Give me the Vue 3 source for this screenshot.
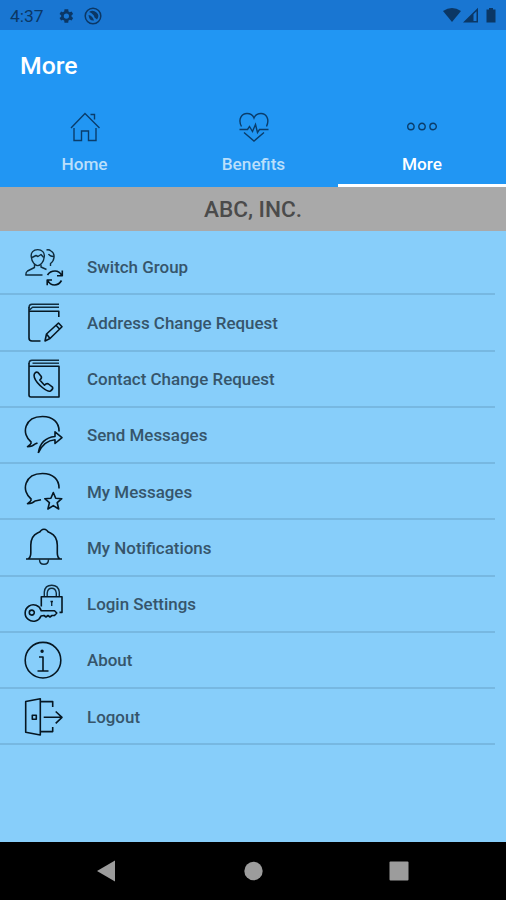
<script setup>
const tabs = [
  {
    label: 'Home',
    icon: ['M2 17 16 2.500 30.500 17', 'M5 17V29.500H12.500V20H19.500V29.500H27V17', 'M21.500 3.500H25.500V8.500']
  },
  {
    label: 'Benefits',
    icon: [
      'M3.500 15.500C-.5 8 4 2.500 9 2.500C13 2.500 15 4.500 16 7C17 4.500 19 2.500 23 2.500C28 2.500 32 8 28.500 15.500',
      'M1.500 18.500H9.500L11.500 15.500 14.500 20.500 17.500 13.500 19.500 21.500 21.500 18.500H30.500',
      'M6 21.500 16 30 26 21.500'
    ]
  },
  {
    label: 'More',
    active: true,
    icon: [
      'M1.700 15.500a3.200 3.200 0 1 0 6.400 0a3.200 3.200 0 1 0-6.400 0',
      'M12.800 15.500a3.200 3.200 0 1 0 6.400 0a3.200 3.200 0 1 0-6.400 0',
      'M23.900 15.500a3.200 3.200 0 1 0 6.400 0a3.200 3.200 0 1 0-6.400 0'
    ]
  }
]

const bubbleTop = 'M7.500 27.500C-3.500 19 .5 1.500 18.500 1.500C29 1.500 35.300 7.500 35 16.500'
const bubbleTail = 'M7.500 27.500Q6.500 30 3.500 31.700Q8.500 31.700 11 29'
const book = 'M35 1.300H8Q5 1.300 5 4.500'

const items = [
  {
    label: 'Switch Group',
    icon: [
      'M7.300 10C6.500 5.500 9.500 2.600 13.700 2.600S21 5.500 20.200 10C19.800 15 16.500 18.600 13.700 18.600S7.800 15 7.300 10',
      'M8 10.500 12 8.500 14 9.500 17 7.500 19.700 10.500',
      'M10.500 17V20.500L3.500 24Q1.800 25 1.800 28H18.500M17 17.500V20L22.500 22.500',
      'M22.500 3Q25 2.300 27 4Q30.500 6 30 10.500Q29.500 14.500 26.500 16.500V19M24.500 7Q26 9.500 29.500 9.500'
    ],
    bold: ['M23.500 28Q26 24 31 24Q35.500 24 37.700 28.500M38.300 23.500V28.800H33M37.500 33.500Q35 38 30.500 38Q26 38 23.800 33.500M23.200 38.300V33H28']
  },
  {
    label: 'Address Change Request',
    icon: [book, 'M35 4.300H8.500L5.500 7'],
    bold: [
      'M5 4V35Q5 38 8 38H16.500M5.500 8.200H34.800V14',
      'M21 38 22.500 31 34.500 20 38 23.700 26 35.500ZM22.500 31 26 35.500M32 22.300 35.500 26'
    ]
  },
  {
    label: 'Contact Change Request',
    icon: [book, 'M35 4.200H8.500'],
    bold: [
      'M5 4V36Q5 38 7 38H35V7.300H5',
      'M10.300 15Q12 12.300 14 13.500L17.300 17.500Q18 19 15.800 21L20.500 26.200Q22.500 24 24.500 25L28.500 28.200Q29.500 30 26.500 32Q24 33 19 29Q12 23.500 10.400 18.500Q9.800 16.500 10.300 15'
    ]
  },
  {
    label: 'Send Messages',
    icon: [],
    bold: [
      bubbleTop,
      bubbleTail + 'L13.500 28',
      'M14.300 38Q16.500 23 31 21.500V16.800L38 22.600 31 28.500V24.800Q20 25.500 14.300 38'
    ]
  },
  {
    label: 'My Messages',
    icon: [],
    bold: [
      bubbleTop,
      bubbleTail + 'L17 27.800',
      'M29.300 20.500 31.700 26.300 37.800 26.700 33.200 30.700 34.700 37 29.300 33.600 23.900 37 25.400 30.700 20.800 26.700 26.900 26.300Z'
    ]
  },
  {
    label: 'My Notifications',
    icon: ['M15.500 31.500Q15.500 36.300 20 36.300T24.500 31.500'],
    bold: [
      'M2 31H38M4 31Q6.800 29.500 6.800 25V17Q7 8 13.500 5Q16.500 4 17 2.500Q20 0 23 2.500Q23.500 4 26.500 5Q33 8 33.300 17V25Q33.300 29.500 36 31'
    ]
  },
  {
    label: 'Login Settings',
    icon: [
      'M20.300 12.500V8Q21 1.300 27.700 1.300T35.300 8V12.500M23.200 12.500V9Q23.800 4.300 27.700 4.300T32.300 9V12.500',
      'M27.700 17V22'
    ],
    bold: [
      'M17.300 22.500V12.800H38V28.400H35.500',
      'M17.200 26.700A8.200 8.200 0 1 0 17 32L20 31.500 22 33 24 31.500 26 33 28 31.500 30.500 31.500 32.800 29 30.500 26.700Z',
      'M5.300 28.600a2.500 2.500 0 1 0 5 0a2.500 2.500 0 1 0-5 0M26.500 17.500H28.900'
    ]
  },
  {
    label: 'About',
    icon: [],
    bold: [
      'M1.200 20.200a17.800 17.800 0 1 0 35.600 0a17.800 17.800 0 1 0-35.600 0',
      'M15 17H19V31M13.500 31H24.500M17.200 11.200a.9.9 0 1 0 1.800 0a.9.9 0 1 0-1.800 0'
    ]
  },
  {
    label: 'Logout',
    icon: [],
    bold: [
      'M1.700 4.500 16.300 1.700V38L1.700 35.300Z',
      'M16.300 4.600H28.700V10M16.300 34.600H28.700V30',
      'M19.700 20.300H38M31.700 14.500 38 20.300 31.700 26.300',
      'M8.300 18.300H12.300V22.300H8.300Z'
    ]
  }
]
</script>

<template>
  <div class="screen">
    <div class="status">
      <span class="clock">4:37</span>
      <svg class="gear" viewBox="0 0 24 24" width="18" height="18">
        <path fill-rule="evenodd" d="M19.400 13a7.500 7.500 0 0 0 0-2l2.100-1.600-2-3.500-2.500 1a7.500 7.500 0 0 0-1.700-1L15 3h-5l-.4 2.900a7.500 7.500 0 0 0-1.700 1l-2.500-1-2 3.500L5.600 11a7.500 7.500 0 0 0 0 2l-2.200 1.600 2 3.500 2.500-1a7.500 7.500 0 0 0 1.700 1L10 21h5l.3-2.900a7.500 7.500 0 0 0 1.700-1l2.500 1 2-3.500zM12.500 15.500a3.500 3.500 0 1 1 0-7 3.500 3.500 0 0 1 0 7z" />
      </svg>
      <svg class="ring" viewBox="0 0 18 18" width="18" height="18">
        <circle cx="9" cy="9" r="7.800" fill="none" stroke="#0b3765" stroke-width="1.500" />
        <path d="M5 5Q9 2.500 12.500 5.500T13 12.500L10.500 10.500Q10 7 5 5ZM4.500 8Q8.500 8.500 10 13.500Q5 14 4.500 8Z" />
      </svg>
      <svg class="signals" viewBox="0 0 56 18" width="56" height="18">
        <path d="M0 4Q9-2 18 4L9 15Z" />
        <path fill-rule="evenodd" d="M20 15.500 35 .7V15.500ZM30.500 7.200V14H33.500V4.200Z" />
        <path d="M43.500 2.500H46V1H50V2.500H52.500V15.500H43.500Z" />
      </svg>
    </div>
    <header class="title">More</header>
    <nav class="tabs">
      <div v-for="t in tabs" :key="t.label" class="tab" :class="{ active: t.active }">
        <svg viewBox="0 0 32 32" width="32" height="32">
          <path v-for="d in t.icon" :key="d" :d="d" />
        </svg>
        <span>{{ t.label }}</span>
      </div>
    </nav>
    <div class="company">ABC, INC.</div>
    <main class="list">
      <div v-for="i in items" :key="i.label" class="row">
        <svg viewBox="0 0 40 40" width="40" height="40">
          <path v-for="d in i.icon" :key="d" :d="d" />
          <path v-for="d in i.bold" :key="d" class="bold" :d="d" />
        </svg>
        <span>{{ i.label }}</span>
      </div>
    </main>
    <footer class="navbar">
      <svg viewBox="0 0 20 22" width="20" height="22"><path d="M0 11 18 .5V21.500Z" /></svg>
      <svg viewBox="0 0 20 22" width="20" height="22"><circle cx="10.500" cy="11" r="9.200" /></svg>
      <svg viewBox="0 0 20 22" width="20" height="22"><rect x=".5" y="1.500" width="19" height="19" rx="1" /></svg>
    </footer>
  </div>
</template>

<style>
body {
  margin: 0;
}
</style>

<style scoped>
.screen {
  width: 506px;
  height: 900px;
  display: flex;
  flex-direction: column;
  overflow: hidden;
  background: #87cefa;
  font-family: Roboto, sans-serif;
  font-weight: 500;
}
svg {
  display: block;
  flex: none;
}
.status {
  height: 30px;
  flex: none;
  box-sizing: border-box;
  padding: 1px 7px 0 10px;
  display: flex;
  align-items: center;
  background: #1976d2;
  fill: #0b3765;
}
.clock {
  width: 47px;
  font-size: 17.400px;
  font-weight: 400;
  color: #0b3765;
}
.ring {
  margin-left: 9px;
}
.signals {
  margin-left: auto;
}
.title {
  height: 73px;
  flex: none;
  box-sizing: border-box;
  padding-left: 20px;
  background: #2196f3;
  color: #fff;
  font-size: 24.800px;
  line-height: 72px;
}
.tabs {
  height: 84px;
  flex: none;
  display: grid;
  grid-template-columns: 169px 169px 168px;
  background: #2196f3;
}
.tab {
  box-sizing: border-box;
  padding-top: 8px;
  display: flex;
  flex-direction: column;
  align-items: center;
  border-bottom: 3px solid transparent;
  color: #badffb;
  font-size: 17.200px;
  line-height: 20px;
}
.tab svg {
  margin-bottom: 10.500px;
  fill: none;
  stroke: #0a3d6b;
  stroke-width: 1.400;
}
.tab.active {
  color: #fff;
  border-bottom-color: #fff;
}
.company {
  height: 44px;
  flex: none;
  background: #a9a9a9;
  color: #4b4b4b;
  text-align: center;
  font-size: 22.600px;
  line-height: 46px;
}
.list {
  flex: 1;
  padding: 8px 11px 0 0;
}
.row {
  height: 56.250px;
  box-sizing: border-box;
  border-bottom: 2px solid #77b8e1;
  padding: 1px 0 0 24px;
  display: flex;
  align-items: center;
  gap: 23px;
  color: #36556b;
  font-size: 16.950px;
}
.row svg {
  fill: none;
  stroke: #102c3d;
  stroke-width: 1.400;
  stroke-linejoin: round;
}
.row .bold {
  stroke: #061722;
  stroke-width: 1.600;
}
.navbar {
  height: 58px;
  flex: none;
  box-sizing: border-box;
  padding: 0 97px 0 97px;
  display: flex;
  align-items: center;
  justify-content: space-between;
  background: #000;
  fill: #9c9c9c;
}
</style>
